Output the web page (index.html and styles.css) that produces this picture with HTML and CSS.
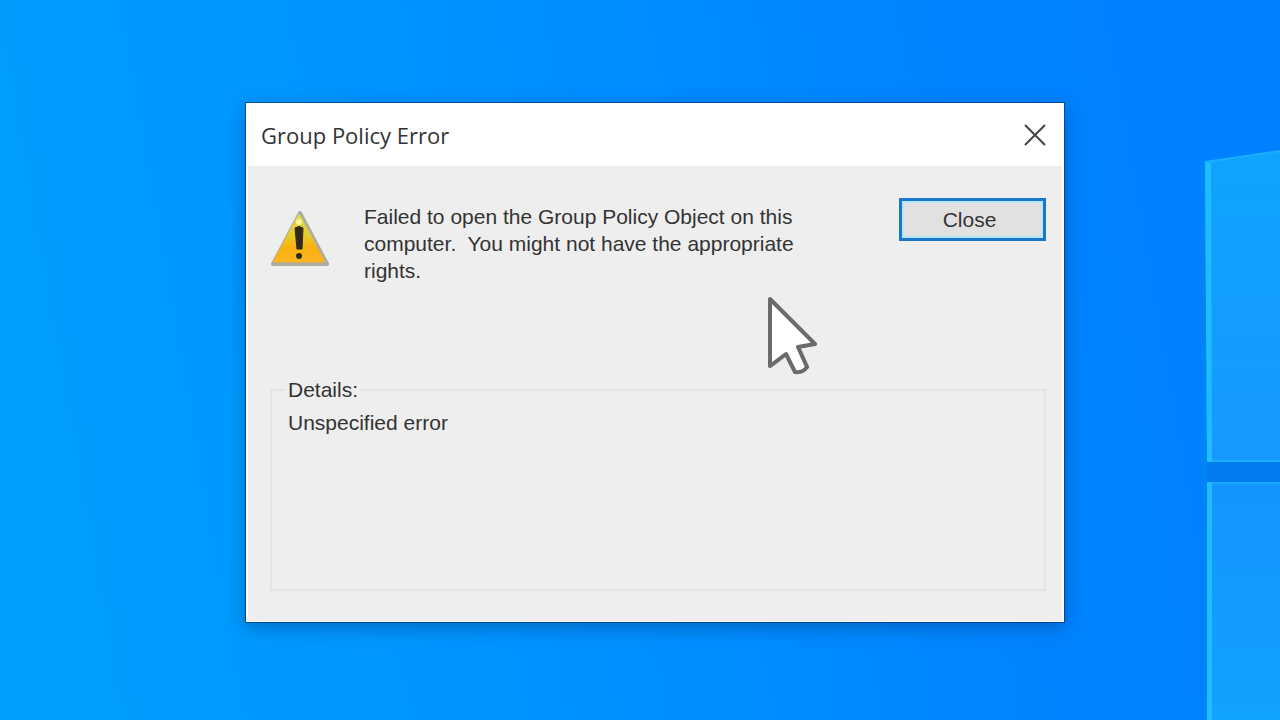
FILE: index.html
```html
<!DOCTYPE html>
<html lang="en">
<head>
  <meta charset="UTF-8" />
  <meta name="viewport" content="width=device-width, initial-scale=1.0" />
  <title>Group Policy Error</title>
  <link rel="stylesheet" href="styles.css">
</head>
<body>

  <div class="desktop">
    <!-- Window panes of the wallpaper -->
    <svg class="panes" width="80" height="580" viewBox="0 0 80 580" aria-hidden="true">
      <defs>
        <linearGradient id="pane-top" x1="0" y1="0" x2="0" y2="1">
          <stop offset="0" stop-color="#10a3ff" />
          <stop offset="1" stop-color="#1699ff" />
        </linearGradient>
        <linearGradient id="pane-bottom" x1="0" y1="0" x2="0" y2="1">
          <stop offset="0" stop-color="#1495ff" />
          <stop offset="1" stop-color="#12a2ff" />
        </linearGradient>
      </defs>
      <path d="M4 21 L6 580" stroke="#0088e8" stroke-width="4" opacity="0.6" />
      <path d="M7 320 H80 V344 H7 Z" fill="#007cf0" />
      <path d="M5 22 L80 11 V322 H7 Z" fill="url(#pane-top)" />
      <path d="M5 22 L80 11" stroke="#19b0ff" stroke-width="2" />
      <path d="M7 321 H80" stroke="#19acff" stroke-width="2" />
      <path d="M5 22 L11 23 L12 322 H7 Z" fill="#1fbcff" />
      <path d="M7 342 H80 V580 H7 Z" fill="url(#pane-bottom)" />
      <path d="M7 343 H80" stroke="#19a8ff" stroke-width="2" />
      <path d="M7 342 H12 V580 H7 Z" fill="#1fbcff" />
    </svg>

    <main class="dialog" role="alertdialog" aria-labelledby="dialog-title" aria-describedby="dialog-message">
      <header class="title-bar">
        <h1 id="dialog-title">Group Policy Error</h1>
        <button class="close-icon" type="button" aria-label="Close window">
          <svg width="22" height="22" viewBox="0 0 22 22" aria-hidden="true">
            <path d="M1 1 L21 21 M21 1 L1 21" stroke="#444" stroke-width="2" fill="none" />
          </svg>
        </button>
      </header>

      <div class="content">
        <section class="message-row">
          <svg class="warning" width="60" height="58" viewBox="0 0 60 58" aria-hidden="true">
            <defs>
              <linearGradient id="warning-fill" x1="0" y1="0" x2="0" y2="1">
                <stop offset="0" stop-color="#e0d84c" />
                <stop offset="0.45" stop-color="#e6cb28" />
                <stop offset="0.7" stop-color="#f9b010" />
                <stop offset="1" stop-color="#fbb51c" />
              </linearGradient>
            </defs>
            <path d="M30 3 L57 54 H3 Z" fill="#b0aba2" stroke="#b0aba2" stroke-width="4" stroke-linejoin="round" />
            <path d="M29 6 L53 51 H5 Z" fill="url(#warning-fill)" stroke="url(#warning-fill)" stroke-width="3" stroke-linejoin="round" />
            <circle cx="29" cy="12" r="3" fill="#f8f3a0" />
            <path d="M25 18 Q29 15 33 18 L32 39 H27 Z" fill="#33291a" stroke="#33291a" stroke-width="1" />
            <circle cx="29" cy="46" r="3" fill="#33291a" />
          </svg>
          <p id="dialog-message" class="message">Failed to open the Group Policy Object on this computer.&nbsp; You might not have the appropriate rights.</p>
          <button class="close-button" type="button">Close</button>
        </section>

        <fieldset class="details">
          <legend>Details:</legend>
          <p>Unspecified error</p>
        </fieldset>
      </div>
    </main>

    <svg class="cursor" width="54" height="82" viewBox="0 0 54 82" aria-hidden="true">
      <path d="M4 6 L49 51 L33 54 L42 74 L31 80 L21 61 L4 74 Z" fill="#999" opacity="0.3" transform="translate(2 1)" />
      <path d="M4 6 L49 51 L32 54 L41 74 Q37 80 29 79 L20 61 L4 73 Z" fill="#fff" stroke="#6a6a6a" stroke-width="4" stroke-linejoin="round" />
    </svg>
  </div>

</body>
</html>
```

FILE: styles.css
```css
body {
  margin: 0;
  font-family: "Liberation Sans", Arial, sans-serif;
  color: #333;
}

.desktop {
  position: relative;
  min-height: 100vh;
  overflow: hidden;
  background: linear-gradient(80deg, #00a0ff 0%, #0094ff 35%, #0084ff 75%, #0080ff 100%);
}

.panes {
  position: absolute;
  top: 140px;
  right: 0;
}

.dialog {
  position: absolute;
  top: 103px;
  left: 246px;
  width: 818px;
  box-sizing: border-box;
  border: 1px solid #fff;
  border-width: 1px 2px;
  background-color: #eee;
  box-shadow: 0 0 0 1px rgba(0, 50, 100, 0.6), 0 5px 18px rgba(0, 50, 110, 0.45);
}

.title-bar {
  display: flex;
  align-items: center;
  justify-content: space-between;
  height: 62px;
  padding: 0 16px 0 13px;
  background-color: #fff;
}

.title-bar h1 {
  margin: 0;
  font-family: "Open Sans", "Noto Sans", sans-serif;
  font-size: 22px;
  font-weight: 400;
}

.close-icon {
  display: flex;
  padding: 0;
  border: 0;
  background: none;
}

.content {
  padding: 32px 16px 30px 22px;
}

.message-row {
  display: flex;
  align-items: flex-start;
  min-height: 178px;
}

.warning {
  margin-top: 12px;
}

.message {
  width: 448px;
  margin: 5px auto 0 34px;
  font-size: 21px;
  line-height: 27px;
}

.close-button {
  width: 147px;
  height: 43px;
  padding: 0 6px 0 0;
  border: 3px solid #1878cc;
  background-color: #e1e1e1;
  box-shadow: inset 0 0 0 2px #b4e6ff;
  font: inherit;
  font-size: 21px;
  color: #333;
}

.details {
  min-height: 215px;
  box-sizing: border-box;
  margin: 0;
  padding: 0 14px;
  border: 2px solid #e4e4e4;
  font-size: 21px;
  line-height: 27px;
}

.details legend {
  padding: 0 2px;
}

.details p {
  margin: 6px 2px;
}

.cursor {
  position: absolute;
  top: 293px;
  left: 766px;
}
```
